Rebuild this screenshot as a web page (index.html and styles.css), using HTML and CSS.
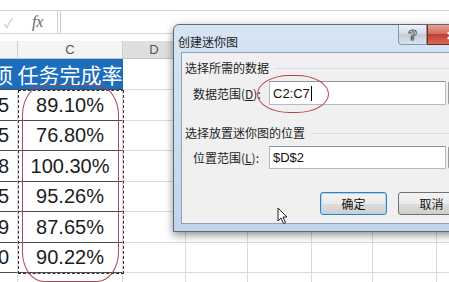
FILE: index.html
```html
<!DOCTYPE html>
<html lang="zh-CN">
<head>
    <meta charset="UTF-8">
    <title>创建迷你图</title>
    <link rel="stylesheet" href="styles.css">
</head>
<body>

<div class="top-strip"></div>
<div class="formula-bar">
    <div class="fb-buttons">
        <span class="fb-check">&#10003;</span>
        <span class="fb-fx">fx</span>
    </div>
    <div class="fb-input"></div>
</div>
<div class="spacer"></div>

<div class="grid" id="grid"></div>

<!-- marching ants around the copied range -->
<div class="ants"></div>
<div class="ring ring-big"></div>

<div class="dialog">
    <div class="titlebar">
        <span class="title">创建迷你图</span>
        <span class="help">?</span>
        <span class="close">&#10005;</span>
    </div>
    <div class="client">
        <div class="group">选择所需的数据</div>
        <div class="field">
            <label>数据范围(<u>D</u>):</label>
            <div class="input">C2:C7<span class="caret"></span></div>
            <span class="pick"></span>
        </div>
        <div class="group group-second">选择放置迷你图的位置</div>
        <div class="field field-second">
            <label>位置范围(<u>L</u>):</label>
            <div class="input">$D$2</div>
            <span class="pick"></span>
        </div>
        <div class="buttons">
            <button class="btn btn-default">确定</button>
            <button class="btn">取消</button>
        </div>
    </div>
</div>

<div class="ring ring-small"></div>

<svg class="cursor" width="12" height="18" viewBox="0 0 12 18">
    <path d="M1 1 L1 14 L4 11 L6.5 16.5 L8.5 15.5 L6 10 L10 10 Z" fill="#fff" stroke="#222" stroke-width="1" stroke-linejoin="round"/>
</svg>

<script>
    // B is only partly visible on the left edge
    const rows = [
        { b: '', c: 'C', d: 'D', type: 'hd' },
        { b: '项', c: '任务完成率', d: '', type: 'blue' },
        { b: '5', c: '89.10%', d: '' },
        { b: '5', c: '76.80%', d: '' },
        { b: '8', c: '100.30%', d: '' },
        { b: '5', c: '95.26%', d: '' },
        { b: '9', c: '87.65%', d: '' },
        { b: '0', c: '90.22%', d: '' },
        { b: '', c: '', d: '', type: 'tail' }
    ];
    const extraCols = ['E', 'F', 'G', 'H', 'I'];

    function renderGrid() {
        const grid = document.getElementById('grid');
        rows.forEach(row => {
            const cells = [row.b, row.c, row.d].concat(row.type === 'hd' ? extraCols : ['', '', '', '', '']);
            cells.forEach((text, i) => {
                const cell = document.createElement('div');
                cell.classList.add('cell');
                if (row.type) cell.classList.add(row.type);
                if (i === 0) cell.classList.add('col-b');
                if (i === 1) cell.classList.add('col-c');
                if (i === 2) cell.classList.add('col-d');
                if (!row.type && i < 2) cell.classList.add('val');
                const span = document.createElement('span');
                span.innerText = text;
                cell.appendChild(span);
                grid.appendChild(cell);
            });
        });
    }

    renderGrid();
</script>

</body>
</html>
```

FILE: styles.css
```css
body {
    margin: 0;
    width: 449px;
    height: 282px;
    overflow: hidden;
    position: relative;
    background-color: #fff;
    font-family: "Liberation Sans", "Noto Sans CJK SC", sans-serif;
}

.top-strip {
    height: 10px;
    border-bottom: 1px solid #d2d2d2;
}

.formula-bar {
    display: flex;
    height: 22px;
    border-bottom: 1px solid #d6d6d6;
}

.fb-buttons {
    width: 57px;
    display: flex;
    align-items: center;
    border-right: 1px solid #d0d0d0;
}

.fb-check {
    margin-left: 4px;
    font-size: 13px;
    color: #c4c4c4;
}

.fb-fx {
    margin-left: 19px;
    font-family: "Liberation Serif", serif;
    font-style: italic;
    font-size: 16px;
    color: #666;
}

.fb-input {
    flex: 1;
    margin-left: 2px;
    border-left: 1px solid #c8c8c8;
}

.spacer {
    height: 7px;
}

.grid {
    display: grid;
    grid-template-columns: 18px 105px 63px 62px 64px 61px 64px 40px;
    grid-template-rows: 18px 31px 31px 30px 31px 30px 31px 30px 20px;
}

.cell {
    box-sizing: border-box;
    display: flex;
    align-items: center;
    justify-content: center;
    overflow: hidden;
    white-space: nowrap;
    border-right: 1px solid #dadada;
    border-bottom: 1px solid #dadada;
}

.cell.hd {
    background-color: #f4f4f4;
    border-bottom-color: #c4c4c4;
    border-right-color: #cdcdcd;
    font-size: 13px;
    color: #555;
}

.cell.hd.col-d {
    background-color: #dedede;
}

.cell.blue.col-b, .cell.blue.col-c {
    background-color: #1c6dbb;
    color: #fff;
    font-family: "Noto Sans CJK SC", sans-serif;
    font-size: 21px;
    border-right-color: #1c6dbb;
    border-bottom-color: #4a4a4a;
}

.cell.col-b {
    justify-content: flex-end;
    padding-right: 4px;
}

.cell.val {
    font-size: 20px;
    color: #1c1c1c;
    border-bottom-color: #4d4d4d;
}

.cell.val.col-b {
    padding-right: 8px;
}

.ants {
    position: absolute;
    left: 18px;
    top: 90px;
    width: 106px;
    height: 184px;
    box-sizing: border-box;
    border: 1px dashed #333;
}

.ring {
    position: absolute;
    box-sizing: border-box;
    border: 1.5px solid #b04858;
}

.ring-big {
    left: 22px;
    top: 85px;
    width: 97px;
    height: 197px;
    border-radius: 22px / 30px;
    border-top-color: #8e4a78;
}

.ring-small {
    left: 257px;
    top: 75px;
    width: 72px;
    height: 38px;
    border-radius: 45% / 50%;
    border-color: #b84444;
}

/* dialog window */
.dialog {
    position: absolute;
    left: 173px;
    top: 24px;
    width: 310px;
    height: 208px;
    box-sizing: border-box;
    display: flex;
    flex-direction: column;
    padding: 0 7px 7px;
    border: 1px solid #5c6a78;
    border-radius: 6px 6px 0 0;
    background: linear-gradient(#d6e5f4, #c0d5ec);
    box-shadow: 0 3px 9px rgba(0, 0, 0, 0.45);
    font-family: "Noto Sans CJK SC", sans-serif;
}

.titlebar {
    height: 27px;
    display: flex;
    align-items: flex-start;
}

.title {
    flex: 1;
    margin-top: 9px;
    margin-left: -3px;
    font-size: 12px;
    line-height: 16px;
    color: #222;
}

.help {
    width: 29px;
    height: 20px;
    box-sizing: border-box;
    border: 1px solid #8a96a4;
    border-top: none;
    border-radius: 0 0 0 4px;
    background: linear-gradient(#f0f3f6, #d2dae3 50%, #c3ccd6 50%, #dbe2ea);
    text-align: center;
    font-family: "Liberation Sans", sans-serif;
    font-weight: bold;
    font-size: 15px;
    line-height: 19px;
    color: #fff;
    -webkit-text-stroke: 1px #4c5866;
}

.close {
    width: 48px;
    height: 20px;
    box-sizing: border-box;
    border: 1px solid #7a2a22;
    border-top: none;
    background: linear-gradient(#e8a394, #d0685a 50%, #c0402f 50%, #d96a52);
    text-align: center;
    font-size: 12px;
    line-height: 19px;
    color: #fff;
    font-weight: bold;
}

.client {
    flex: 1;
    background-color: #f0f0f0;
    border: 1px solid #8ea2ba;
    padding-top: 7px;
}

.group {
    display: flex;
    align-items: center;
    padding-left: 3px;
    font-size: 12px;
    line-height: 16px;
    color: #1e1e1e;
}

.group::after {
    content: "";
    flex: 1;
    margin-left: 6px;
    border-top: 1px solid #d6dde3;
}

.group-second {
    margin-top: 20px;
}

.field {
    display: flex;
    align-items: center;
    margin-top: 5px;
    height: 24px;
}

.field-second {
    height: 23px;
}

.field label {
    width: 76px;
    padding-left: 11px;
    font-size: 12px;
    color: #1e1e1e;
}

.input {
    width: 177px;
    height: 100%;
    box-sizing: border-box;
    display: flex;
    align-items: center;
    padding-left: 3px;
    border: 1px solid #b6b9c0;
    border-top-color: #8e939b;
    background-color: #fff;
    font-family: "Liberation Sans", sans-serif;
    font-size: 13px;
    color: #111;
}

.caret {
    width: 1px;
    height: 15px;
    margin-left: 1px;
    background-color: #000;
}

.pick {
    width: 20px;
    height: 100%;
    margin-left: 2px;
    box-sizing: border-box;
    border: 1px solid #9a9a9a;
    border-radius: 2px;
    background: linear-gradient(#f6f6f6, #dcdcdc);
}

.buttons {
    display: flex;
    gap: 11px;
    margin-top: 23px;
    padding-left: 138px;
}

.btn {
    width: 67px;
    height: 23px;
    padding: 0;
    border: 1px solid #707070;
    border-radius: 3px;
    background: linear-gradient(#f3f3f3, #ebebeb 50%, #dddddd 50%, #cfcfcf);
    font-family: "Noto Sans CJK SC", sans-serif;
    font-size: 12px;
    color: #111;
}

.btn-default {
    border-color: #3c7fb1;
    box-shadow: inset 0 0 0 1px #a8d8f6;
}

.cursor {
    position: absolute;
    left: 277px;
    top: 207px;
}
```
